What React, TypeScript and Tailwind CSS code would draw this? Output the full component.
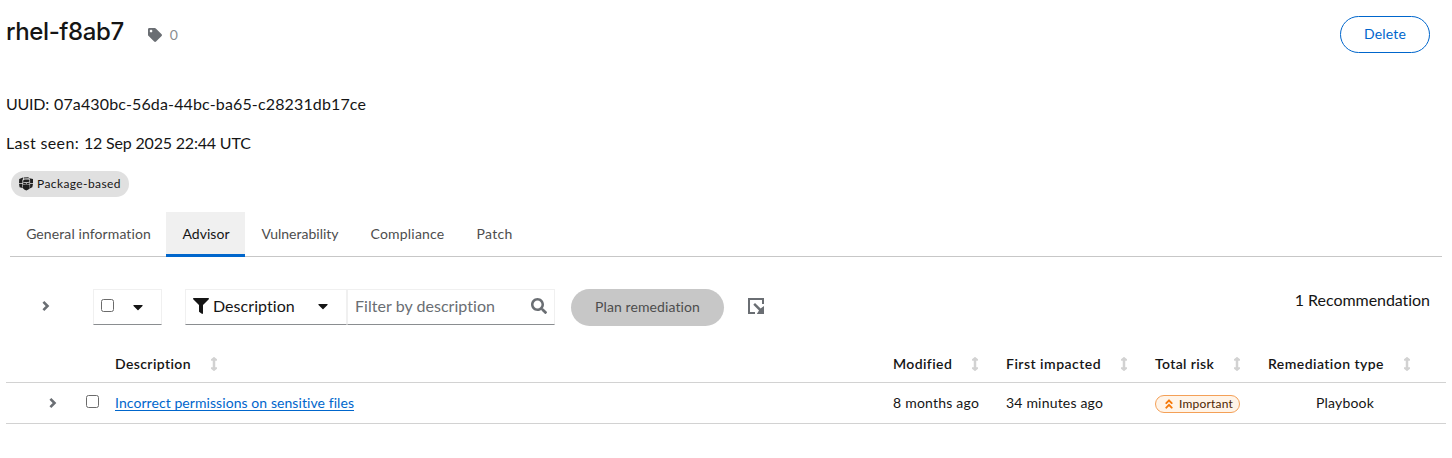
import type { ReactNode } from 'react';
import { FaAngleDoubleUp, FaArrowsAltV, FaCaretDown, FaFilter, FaSearch, FaTag } from 'react-icons/fa';

function PackageIcon() {
  return (
    <svg className="h-[14px] w-[14px] shrink-0" viewBox="0 0 14 14" fill="#1f1f1f">
      <path d="M.2 1.9 3.9.6 4 2.1 3.4 3v3.3H0zM0 7h3.4v3.2l1 1.1L.6 10.3zM4.7.4 9.2.2l1.1 1-5.6.4zM10.3 1.2l3.7.9V6.2h-2.9V3.3zM11.1 7H14l-.7 3.2-3.2 1.5 1-1.7z" />
      <path d="m4.2 3.5 1.3-.9h4.1l1 1-.3 1.1-2.9.6L4.2 4.9zM4 5.5l3.1.7v1L4 6.8zM7.7 6.1l2.9-.6v1.2l-2.9.5zM4 7.5l6.6.1v3.6l-1.2 1.4-2.1.9-2.1-.9L4 11.2z" />
    </svg>
  );
}

function ExportIcon() {
  return (
    <svg className="h-4 w-4" viewBox="0 0 16 16" fill="#6a6e73">
      <path d="M0 0h16v6h-2V2H2v12h5v2H0z" />
      <path d="m7 4.9 5.6 5.6L16 8v8H8.8l2.2-3.6-5.7-5.7z" />
    </svg>
  );
}

function Chevron({ className }: { className: string }) {
  return (
    <svg className={`h-[12px] w-[8px] shrink-0 ${className}`} viewBox="0 0 8 12" fill="none" stroke="#6a6e73" strokeWidth="2.6">
      <path d="M1.4 1.9 5.5 6 1.4 10.1" />
    </svg>
  );
}

function Checkbox({ className }: { className: string }) {
  return <input type="checkbox" className={`block h-[13px] w-[13px] shrink-0 appearance-none rounded-[2.5px] border border-[#6b6b6b] bg-white ${className}`} />;
}

function Header({ children, width, label }: { children: ReactNode; width: string; label: string }) {
  return (
    <div className={`flex shrink-0 items-center gap-5 font-semibold ${width}`}>
      <span className={`whitespace-nowrap ${label}`}>{children}</span>
      <FaArrowsAltV className="h-[14px] w-[6px] shrink-0 text-[#d2d2d2]" preserveAspectRatio="none" viewBox="32 0 192 512" />
    </div>
  );
}

const tabs = [
  { label: 'General information', style: 'w-[156px] tracking-[0.1px]' },
  { label: 'Advisor', style: 'w-[79px] tracking-[0.03px]' },
  { label: 'Vulnerability', style: 'w-[109px]' },
  { label: 'Compliance', style: 'w-[106px] tracking-[0.2px]' },
  { label: 'Patch', style: 'w-[68px] tracking-[0.3px]' },
];

export default function App() {
  return (
    <main className="h-[458px] w-[1452px] overflow-hidden bg-white font-['Lato',sans-serif] text-[#151515]">
      <header className="flex h-[86px] items-start justify-between pt-4 pr-[22px] pl-[6px]">
        <div className="flex items-center">
          <h1 className="font-['Inter',sans-serif] text-2xl leading-8 font-medium tracking-[-0.4px]">rhel-f8ab7</h1>
          <FaTag className="mt-[5px] ml-[24px] h-[14px] w-[14px] text-[#6a6e73]" />
          <span className="mt-[6px] ml-2 text-sm text-[#8a8d90]">0</span>
        </div>
        <button className="h-[37px] w-[90px] rounded-full border border-[#0066cc] pb-[2px] text-sm tracking-[0.17px] text-[#0066cc]">Delete</button>
      </header>

      <section className="h-[126px] pt-[6px] pl-[6px] text-base leading-6">
        <p className="flex gap-[5px]">
          <span className="w-[43px] tracking-[-0.25px]">UUID:</span>
          <span className="tracking-[0.14px]">07a430bc-56da-44bc-ba65-c28231db17ce</span>
        </p>
        <p className="mt-[15px] flex gap-[5px]">
          <span className="w-[73px] tracking-[0.33px]">Last seen:</span>
          <span className="tracking-[-0.19px]">12 Sep 2025 22:44 UTC</span>
        </p>
        <div className="mt-[16px] ml-[5px] flex h-[26px] w-[118px] items-center gap-1 rounded-full bg-[#e0e0e0] pl-2 text-xs tracking-[0.4px]">
          <PackageIcon />
          <span>Package-based</span>
        </div>
      </section>

      <nav className="mx-[10px] flex h-[45px] border-b border-[#c7c7c7] text-sm">
        {tabs.map(({ label, style }) => (
          <button
            key={label}
            className={`h-[45px] shrink-0 whitespace-nowrap border-b-3 pt-[2px] pl-px ${style} ${label === 'Advisor' ? 'border-[#0066cc] bg-[#f0f0f0] text-[#151515]' : 'border-transparent text-[#4d4d4d]'}`}
          >
            {label}
          </button>
        ))}
      </nav>

      <div className="flex h-[90px] items-start pt-8">
        <Chevron className="mt-[11px] ml-[42px]" />
        <div className="ml-[43px] flex h-[36px] w-[69px] border border-[#f0f0f0] border-b-[#8a8d90]">
          <Checkbox className="mt-[9px] ml-[7px]" />
          <FaCaretDown className="mt-[9px] ml-[16px] h-4 w-4" />
        </div>
        <div className="ml-[23px] flex h-[36px] w-[162px] items-center border border-[#f0f0f0] border-b-[#8a8d90] pb-[2px] pl-[7px]">
          <FaFilter className="h-4 w-4" />
          <span className="ml-1 w-[82px] tracking-[0.05px]">Description</span>
          <FaCaretDown className="ml-[20px] h-4 w-4" />
        </div>
        <div className="flex h-[36px] w-[208px] items-center border border-[#f0f0f0] border-b-[#8a8d90] pb-[2px] pl-[7px] text-[#6a6e73]">
          <span className="w-[176px] tracking-[0.04px]">Filter by description</span>
          <FaSearch className="h-4 w-4" />
        </div>
        <button className="ml-4 h-[37px] w-[153px] rounded-full bg-[#c7c7c7] pb-[2px] text-sm tracking-[0.09px] text-[#4d4d4d]">Plan remediation</button>
        <div className="mt-[9px] ml-[24px]"><ExportIcon /></div>
        <span className="-mt-px mr-[22px] ml-auto tracking-[-0.05px]">1 Recommendation</span>
      </div>

      <section className="mx-[6px] text-sm">
        <div className="flex h-[36px] items-center border-b border-[#d2d2d2] pb-[2px] pl-[109px]">
          <Header width="w-[778px]" label="tracking-[0.38px] w-[76px]">Description</Header>
          <Header width="w-[113px]" label="tracking-[0.4px] w-[59px]">Modified</Header>
          <Header width="w-[149px]" label="tracking-[0.48px] w-[95px]">First impacted</Header>
          <Header width="w-[113px]" label="tracking-[0.36px] w-[59px]">Total risk</Header>
          <Header width="w-[172px]" label="tracking-[0.44px] w-[116px]">Remediation type</Header>
        </div>
        <div className="flex h-[41px] items-center border-b border-[#d2d2d2]">
          <Chevron className="ml-[43px]" />
          <Checkbox className="mb-[3px] ml-[29px]" />
          <a className="ml-4 w-[778px] tracking-[0.07px] text-[#0066cc] underline underline-offset-2">Incorrect permissions on sensitive files</a>
          <span className="w-[113px] tracking-[0.22px]">8 months ago</span>
          <span className="w-[149px] tracking-[0.19px]">34 minutes ago</span>
          <span className="mt-px flex h-[18px] w-[85px] items-center rounded-full border border-[#f4a057] bg-[#fff4e8] pl-2 text-xs tracking-[0.2px] text-[#4d2500]">
            <FaAngleDoubleUp className="mr-[5px] h-3 w-[10px] text-[#f5790a]" />
            Important
          </span>
          <span className="ml-[76px] tracking-[0.19px]">Playbook</span>
        </div>
      </section>
    </main>
  );
}
